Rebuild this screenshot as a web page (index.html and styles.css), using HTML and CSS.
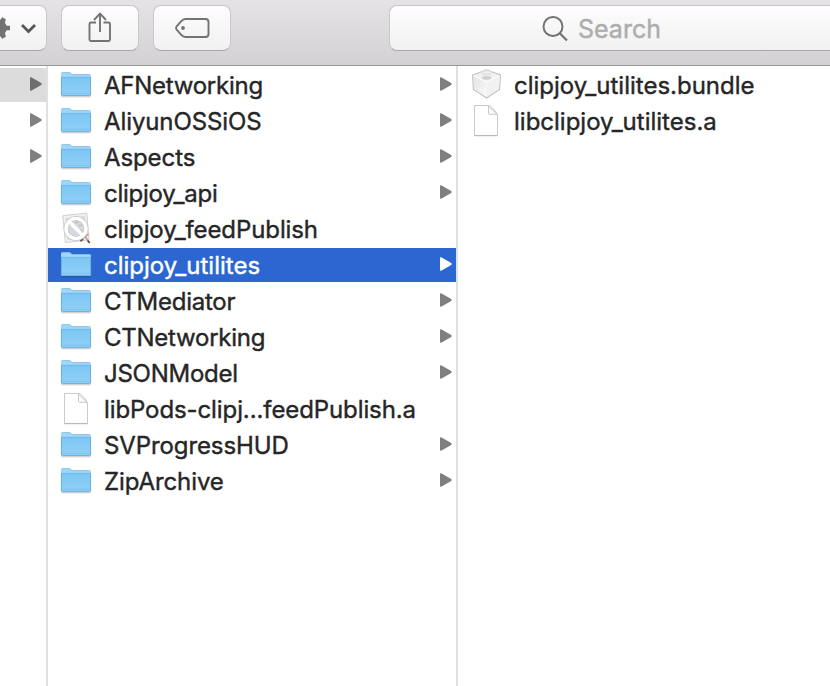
FILE: index.html
```
<!DOCTYPE html>
<html lang="en">
<head>
<meta charset="utf-8">
<title>Finder</title>
<link rel="stylesheet" href="styles.css">
</head>
<body>
<svg class="defs" width="0" height="0" aria-hidden="true">
  <defs>
    <linearGradient id="blue" x1="0" y1="0" x2="0" y2="1"><stop offset="0" stop-color="#7cc6f4"/><stop offset="1" stop-color="#92d1f7"/></linearGradient>
    <linearGradient id="side" x1="0" y1="0" x2="1" y2="1"><stop offset="0" stop-color="#e2e2e2"/><stop offset="1" stop-color="#fbfbfb"/></linearGradient>
  </defs>
  <symbol id="folder" viewBox="0 0 32 34">
    <path d="M1.5 28.7h29" stroke="#000" stroke-opacity=".16" stroke-width="1.4"/>
    <path d="M1 6Q1 4.3 2.6 4.3H9Q10 4.3 10.7 5L12 6.3H29.6Q31 6.3 31 7.7V12H1Z" fill="#9fd6f8"/>
    <path d="M1.3 5.2Q1.6 4.5 2.6 4.5H9Q10 4.5 10.7 5.2L12 6.5H29.6" fill="none" stroke="#7fbbe0" stroke-width=".7"/>
    <path d="M1 9.3H31V26.5Q31 28 29.5 28H2.5Q1 28 1 26.5Z" fill="url(#blue)"/>
    <path d="M1.2 9.4H30.8" stroke="#69b6e5" stroke-width=".8"/>
    <path d="M1.4 9.4V26.4Q1.4 27.6 2.6 27.6H29.4Q30.6 27.6 30.6 26.4V9.4" fill="none" stroke="#62a8d2" stroke-width=".8"/>
    <path d="M2 25.4H30" stroke="#74bce6" stroke-width=".7"/>
  </symbol>
  <symbol id="page" viewBox="0 0 32 34">
    <path d="M4.500 1.500H18.500Q20.500 1.500 22 3.500L26 8Q27.500 10 27.500 12V31.500H4.500Z" fill="#fff" stroke="#cbcbcb"/>
    <path d="M4.500 31.700h23" stroke="#b4b4b4"/>
    <path d="M18.500 2V9.200Q18.500 10.300 19.500 10.300H27Z" fill="#fafafa" stroke="#c2c2c2" stroke-width=".9"/>
  </symbol>
  <symbol id="blocked" viewBox="0 0 32 34">
    <path d="M2.800 3.700L26.800 1L29 27.800L5.300 30.600Z" fill="#f0f0ee" stroke="#d2d2d0"/>
    <path d="M5.500 6.200L24.800 4L26.500 25.500L7.200 27.800Z" fill="#d5dbdd"/>
    <path d="M20 29L28.500 22M24 23L29.500 30.500" stroke="#b5a38f" stroke-width="1.600"/>
    <path d="M20.500 29.200L23 27M27.500 28.500L29.700 31" stroke="#6d4737" stroke-width="1.700"/>
    <circle cx="16" cy="16.500" r="10" fill="#d3dadd" stroke="#b2b4b4" stroke-width="4.500"/>
    <path d="M15 11L18 10M19 14L22 13M20 18L22 20" stroke="#c8b49a" stroke-width="1.200"/>
    <circle cx="16" cy="16.500" r="10" fill="none" stroke="#fff" stroke-width="3.600"/>
    <path d="M9 9.500L23 23.500" stroke="#fff" stroke-width="3.600"/>
  </symbol>
  <symbol id="bundle" viewBox="0 0 32 34">
    <path d="M2.500 7L13 3.200Q16.700 1 20 3.200L30.500 7L29.500 21.500Q23 25.500 16.700 30Q9 25 3.500 21.500Z" fill="#f1f1f1" stroke="#c2c2c2" stroke-width="1.200"/>
    <path d="M3.200 8L16.700 14.500V29L4 21Z" fill="url(#side)"/>
    <path d="M29.800 8L16.700 14.500V29L29 21Z" fill="#f1f1f1"/>
    <path d="M3.200 7.500L16.700 14.200L29.800 7.500" fill="none" stroke="#fff" stroke-width="1"/>
    <path d="M12.200 4.500V9.500Q16.700 13 21.200 9.500V4.500Z" fill="#e8e8e8"/>
    <ellipse cx="16.700" cy="4.300" rx="4.500" ry="1.700" fill="#f1f1f1" stroke="#d3d3d3" stroke-width=".6"/>
    <ellipse cx="16.700" cy="10" rx="4.600" ry="1.700" fill="#cecece"/>
  </symbol>
  <symbol id="arrow" viewBox="0 0 12 14">
    <path d="M0 1Q0 0 1.2 .3L11.2 6Q12.2 7 11.2 8L1.2 13.7Q0 14 0 13Z" fill="currentColor"/>
  </symbol>
</svg>

<main class="window">
  <header class="toolbar">
    <div class="button action">
      <svg width="46" height="44" viewBox="0 0 46 44"><path d="M0 14L2.300 11.200L5.800 13.200L5 17L6.700 19.800H10V24.200H6.700L5 27L5.800 30.800L2.300 32.800L0 30Z" fill="#737373"/><path d="M22 19L28.500 25.500L35 19" fill="none" stroke="#555" stroke-width="2.8"/></svg>
    </div>
    <div class="button">
      <svg width="76" height="44" viewBox="0 0 76 44"><path d="M34 16.500H29Q27.500 16.500 27.500 18V33.500Q27.500 35 29 35H46.500Q48 35 48 33.500V18Q48 16.500 46.500 16.500H41.500" fill="none" stroke="#737373" stroke-width="1.9"/><path d="M38 26V8M32 14L38 7.700L44 14" fill="none" stroke="#737373" stroke-width="1.9"/></svg>
    </div>
    <div class="button">
      <svg width="76" height="44" viewBox="0 0 76 44"><path d="M31.500 13H51.500Q54.500 13 54.500 16V28Q54.500 31 51.500 31H31.500Q29 31 27 28.700L22.500 23.300Q21.500 22 22.500 20.700L27 15.300Q29 13 31.500 13Z" fill="none" stroke="#737373" stroke-width="1.9"/><circle cx="29" cy="22" r="1.900" fill="#737373"/></svg>
    </div>
    <div class="search">
      <svg width="26" height="26" viewBox="0 0 26 26"><circle cx="11" cy="11.500" r="9.500" fill="none" stroke="#737373" stroke-width="2"/><path d="M17.700 18.200L25 25.500" stroke="#737373" stroke-width="2.200"/></svg>
      <span class="placeholder">Search</span>
    </div>
  </header>

  <div class="columns">
    <ul class="column parent">
      <li class="row current"><svg class="arrow"><use href="#arrow"/></svg></li>
      <li class="row"><svg class="arrow"><use href="#arrow"/></svg></li>
      <li class="row"><svg class="arrow"><use href="#arrow"/></svg></li>
    </ul>
    <ul class="column files">
      <li class="row"><svg class="icon"><use href="#folder"/></svg><span class="name tight">AFNetworking</span><svg class="arrow"><use href="#arrow"/></svg></li>
      <li class="row"><svg class="icon"><use href="#folder"/></svg><span class="name snug">AliyunOSSiOS</span><svg class="arrow"><use href="#arrow"/></svg></li>
      <li class="row"><svg class="icon"><use href="#folder"/></svg><span class="name snug">Aspects</span><svg class="arrow"><use href="#arrow"/></svg></li>
      <li class="row"><svg class="icon"><use href="#folder"/></svg><span class="name tight">clipjoy_api</span><svg class="arrow"><use href="#arrow"/></svg></li>
      <li class="row"><svg class="icon"><use href="#blocked"/></svg><span class="name snug">clipjoy_feedPublish</span></li>
      <li class="row selected"><svg class="icon"><use href="#folder"/></svg><span class="name">clipjoy_utilites</span><svg class="arrow"><use href="#arrow"/></svg></li>
      <li class="row"><svg class="icon"><use href="#folder"/></svg><span class="name tight">CTMediator</span><svg class="arrow"><use href="#arrow"/></svg></li>
      <li class="row"><svg class="icon"><use href="#folder"/></svg><span class="name tight">CTNetworking</span><svg class="arrow"><use href="#arrow"/></svg></li>
      <li class="row"><svg class="icon"><use href="#folder"/></svg><span class="name tight">JSONModel</span><svg class="arrow"><use href="#arrow"/></svg></li>
      <li class="row"><svg class="icon"><use href="#page"/></svg><span class="name snug">libPods-clipj...feedPublish.a</span></li>
      <li class="row"><svg class="icon"><use href="#folder"/></svg><span class="name snug">SVProgressHUD</span><svg class="arrow"><use href="#arrow"/></svg></li>
      <li class="row"><svg class="icon"><use href="#folder"/></svg><span class="name snug">ZipArchive</span><svg class="arrow"><use href="#arrow"/></svg></li>
    </ul>
    <ul class="column contents">
      <li class="row"><svg class="icon"><use href="#bundle"/></svg><span class="name">clipjoy_utilites.bundle</span></li>
      <li class="row"><svg class="icon"><use href="#page"/></svg><span class="name">libclipjoy_utilites.a</span></li>
    </ul>
  </div>
</main>
</body>
</html>
```
FILE: styles.css
```
* { box-sizing: border-box; }
body { margin: 0; background: #fff; color: #262626; font-family: Inter, "Liberation Sans", sans-serif; font-size: 24px; }
.defs { display: block; height: 0; }
.window { display: flex; flex-direction: column; width: 830px; height: 686px; overflow: hidden; }
.toolbar { display: flex; flex: none; height: 66px; padding-top: 5px; background: linear-gradient(#e5e3e5, #d3d1d3); border-bottom: 1px solid #98969a; }
.button, .search { height: 46px; border: 1px solid #c9c7c9; border-bottom-color: #aaa8aa; border-radius: 8px; background: linear-gradient(#fdfdfd, #f1f1f1); }
.button { width: 78px; margin-right: 14px; }
.button svg { display: block; }
.action { width: 47px; border-left: 0; border-radius: 0 8px 8px 0; }
.search { display: flex; align-items: center; width: 460px; flex: none; margin-left: 144px; padding-left: 152px; gap: 10px; }
.search svg { flex: none; }
.placeholder { padding-top: 2px; color: #adadad; font-size: 25px; line-height: 44px; -webkit-text-stroke: 0.4px; }
.columns { display: flex; flex: 1; }
.column { margin: 0; padding: 2px 0 0; list-style: none; display: flex; flex-direction: column; gap: 2px; }
.parent { width: 48px; border-right: 2px solid #e0e0e0; }
.files { width: 410px; border-right: 2px solid #e0e0e0; }
.contents { flex: 1; }
.row { display: flex; align-items: center; height: 34px; padding-left: 12px; }
.icon { width: 32px; height: 34px; flex: none; }
.name { margin-left: 12px; padding-top: 2px; line-height: 34px; white-space: nowrap; -webkit-text-stroke: 0.4px; }
.snug { letter-spacing: -0.1px; }
.tight { letter-spacing: -0.25px; }
.arrow { width: 12px; height: 14px; margin: 0 4px 2px auto; color: #808080; flex: none; }
.current { background: #dcdcdc; }
.current .arrow { color: #6e6e6e; }
.selected { background: #2c66d1; color: #fff; }
.selected .arrow { color: #fff; }
```
